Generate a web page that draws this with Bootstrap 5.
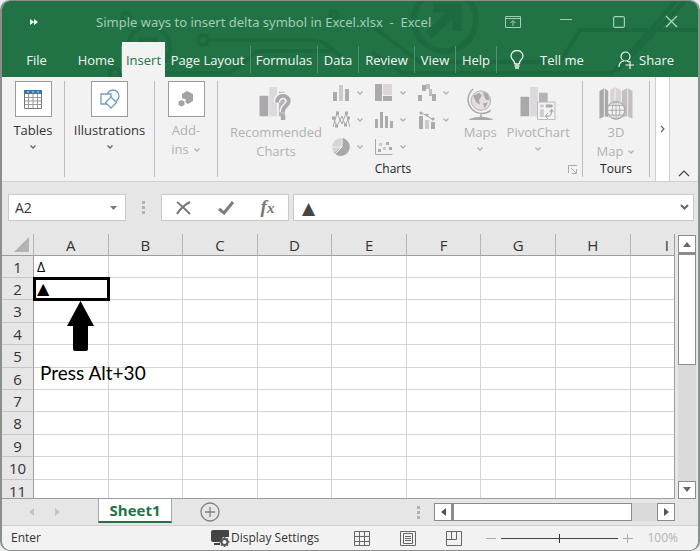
<!DOCTYPE html>
<html lang="en">
<head>
<meta charset="utf-8">
<meta name="viewport" content="width=device-width, initial-scale=1">
<title>Simple ways to insert delta symbol in Excel.xlsx - Excel</title>
<link href="https://cdn.jsdelivr.net/npm/bootstrap@5.3.0/dist/css/bootstrap.min.css" rel="stylesheet">
<style>
:root{--ui:"Open Sans","Noto Sans",sans-serif;--green:#217346;--line:#d4d4d4}
body{font-family:var(--ui);font-size:14px;line-height:18px;color:#333;background:#eceeed}
button,input{font-family:inherit;color:inherit}
button{border:0;background:none;padding:0}
svg{display:block;flex:none}
.window{height:100vh;min-height:480px;border:1px solid #8a8f8c;border-width:1px 2px;border-radius:10px;background:#e6e6e6}
.top-band{background:var(--green);color:#fff}
.circuit{position:absolute;top:0;right:0;z-index:0}
.title-row{height:41px;color:#a3cdb4;font-size:13px}
.quick{width:64px;color:#fff}
.file-name{padding-left:30px;white-space:pre;font-family:"Noto Sans",sans-serif}
.win-btn{width:53px;height:38px}
.tab-row{display:grid;grid-template-columns:69px 51px 43px 86px 67px 41px 56px 41px 41px 1fr auto;height:35px}
.tab-row a,.tab-row button{color:#f1f7f3;text-decoration:none;font-size:13px;white-space:nowrap;display:flex;align-items:center;justify-content:center}
.tab-row .on{background:#f2f2f2;color:var(--green)}
.tab-row .sep{border-right:1px solid #4f9470;margin:4px 0}
.tell-me{padding-left:13px}
.ribbon{background:#f2f2f2;border-bottom:1px solid #cfcfcf;height:107px}
.grp{border-right:1px solid #bdbdbd;margin:4px 0}
.w-side{width:63px}.w-ill{width:90px}.w-tour{width:67px}
.icon-tile{width:37px;height:36px;background:#fff;border:1px solid #9b9b9b}
.rb{display:flex;flex-direction:column;align-items:center;line-height:19px;font-size:13px}
.rb-big{margin-top:6px;align-self:flex-start}
.rb-big>svg:first-child{margin-bottom:2px}
.off{color:#b1b1b1}
.low{color:#666}
.chart-tools{padding:0 12px}
.minis{display:grid;grid-template-columns:43px 43px 36px;grid-auto-rows:23px;row-gap:4px}
.minis button{display:flex;align-items:center;gap:6px;color:#b1b1b1}
.cap{font-size:12px;color:#222;line-height:16px}
.more-strip{width:15px;background:#fff;border:1px solid #cfcfcf;border-width:0 1px;margin-left:5px}
.fold{width:28px;padding-bottom:4px}
.fbar{padding:12px 4px 13px 6px}
.field{height:27px;background:#fff;border:1px solid #c9c9c9}
.name-box{width:118px}
.field input{border:0;background:none;outline:0;min-width:0;padding:0 6px;flex:1}
.tools{width:128px}
.fx{font-family:"Liberation Serif",serif;font-style:italic;font-weight:bold;font-size:19px;color:#777}
.fx small{font-size:15px}
.dots i{display:block;width:3px;height:3px;background:#b3b3b3;margin:2px 0}
.formula{font-family:"DejaVu Sans",sans-serif;font-size:17px;color:#444}
.sheet{min-height:0}
.grid-clip{overflow:hidden;border-bottom:1px solid #9d9d9d;border-right:1px solid #9d9d9d;min-width:0}
.cells{table-layout:fixed;width:100%;border-collapse:separate;border-spacing:0;background:#fff;font-size:15px;line-height:20px}
.cells th{font-weight:400;text-align:center;padding:0;background:#e6e6e6;color:#333;overflow:hidden}
.cells thead th{height:22px;border-right:1px solid #b5b5b5;border-bottom:1px solid #9d9d9d}
.cells thead th:last-child{text-align:right;padding-right:5px;border-right:0}
.cells tbody th{border-right:1px solid #9d9d9d;border-bottom:1px solid #c6c6c6}
.cells td{padding:0 3px;border-right:1px solid var(--line);border-bottom:1px solid var(--line)}
.cells td:last-child{border-right:0}
.cells tbody tr{height:22px}
.cells tbody tr:nth-child(5n+3),.cells tbody tr:nth-child(5n+5){height:23px}
.c-head{width:32px}.c-col{width:11.1%}
.cells .picked{outline:3px solid #000;outline-offset:-2px;font-family:"DejaVu Sans",sans-serif;font-size:16px;color:#000}
.cells .delta{font-size:14px;color:#000}
.note{left:38px;top:67px;color:#000;font:19px/24px Lato,sans-serif}
.note svg{margin:0 0 10px 27px}
.vbar{width:18px;margin:1px 2px 0 3px;background:#dadada}
.sq{width:18px;height:18px;flex:none;background:#fff;border:1px solid #8c8c8c;display:flex;align-items:center;justify-content:center}
.vthumb{height:112px;background:#fff;border:1px solid #8c8c8c;border-top-width:2px}
.sheet-row{height:28px;border-bottom:1px solid #cfcfcf}
.nav-arrows{width:96px;padding-left:27px;gap:21px}
.sheet-tab{width:74px;height:24px;background:#fff;border:1px solid #a8a8a8;border-width:0 1px;border-bottom:2px solid var(--green);color:var(--green);font-weight:700;font-size:15px}
.h-grip{margin-right:14px}
.hbar{width:241px;height:18px;background:#dadada;margin-right:23px}
.hthumb{width:180px;background:#fff;border:1px solid #8c8c8c;border-left-width:2px}
.status{height:24px;background:#f2f2f2;font-size:12px;border-radius:0 0 8px 8px;padding:0 20px 0 9px}
.mode{width:200px}
.views{gap:30px;margin-right:24px}
.zoom{appearance:none;width:117px;height:9px;background:linear-gradient(#444,#444) center/100% 1px no-repeat;margin:0 5px}
.zoom::-webkit-slider-thumb{appearance:none;width:1px;height:9px;background:#333}
.pct{color:#b3b3b3;width:45px;text-align:right}
</style>
<script src="https://cdn.jsdelivr.net/npm/bootstrap@5.3.0/dist/js/bootstrap.bundle.min.js"></script>
</head>
<body>
<svg width="0" height="0" class="position-absolute"><defs>
<symbol id="chev" viewBox="0 0 8 6"><path d="M1.5 1.5 4 4 6.500 1.500" fill="none" stroke="currentColor" stroke-width="1.300"/></symbol>
</defs></svg>
<div class="window d-flex flex-column overflow-hidden">
<header class="top-band position-relative">
<svg class="circuit" width="696" height="76" viewBox="2 1 696 76" fill="none" stroke="#1e6a40" stroke-width="4"><circle cx="203" cy="40" r="5"/><path d="M208 40H314Q325 41 335 52L341 56"/><circle cx="149" cy="47" r="21"/><path d="M138 40H158" stroke-width="5"/><circle cx="115" cy="73" r="5"/><path d="M120 73H230L258 51H332M372 26 420 62H560L580 30H700M372 52 402 73H612L676 1M616 72 685 1"/><circle cx="445" cy="20" r="31" stroke-width="6"/><path d="M429 35 456 9M433 8H457V31" stroke-width="9"/><circle cx="126" cy="17" r="4"/><circle cx="334" cy="15" r="4"/></svg>
<div class="title-row d-flex align-items-center position-relative">
<button class="quick d-flex justify-content-center" aria-label="Quick access"><svg width="8" height="6" viewBox="0 0 8 6" fill="#fff"><path d="M0 0 4 3 0 6ZM4 0 8 3 4 6Z"/></svg></button>
<div class="file-name flex-fill">Simple ways to insert delta symbol in Excel.xlsx  -  Excel</div>
<button class="win-btn d-flex align-items-center justify-content-center" aria-label="Ribbon display options"><svg width="16" height="12" viewBox="0 0 16 12" fill="none" stroke="#a3cdb4"><path d="M.5.5H15.500V11.500H.5ZM.5 2.500H15.500M8 10V5M5.500 7 8 4.500 10.500 7"/></svg></button>
<button class="win-btn d-flex align-items-center justify-content-center" aria-label="Minimize"><svg width="12" height="7" stroke="#a3cdb4"><path d="M0 1.500H12"/></svg></button>
<button class="win-btn d-flex align-items-center justify-content-center" aria-label="Maximize"><svg width="12" height="12" fill="none" stroke="#a3cdb4" stroke-width="1.200"><rect x=".6" y=".6" width="10.800" height="10.800" rx="1.500"/></svg></button>
<button class="win-btn d-flex align-items-center justify-content-center" aria-label="Close"><svg width="13" height="13" stroke="#b5d8c3" stroke-width="1.200"><path d="M1 1 12 12M12 1 1 12"/></svg></button>
</div>
<nav class="tab-row position-relative">
<a href="#">File</a><a href="#" class="sep">Home</a><a href="#" class="on">Insert</a><a href="#" class="sep">Page Layout</a><a href="#" class="sep">Formulas</a><a href="#" class="sep">Data</a><a href="#" class="sep">Review</a><a href="#" class="sep">View</a><a href="#" class="sep">Help</a>
<button class="tell-me justify-content-start" type="button"><svg class="me-3" width="14" height="19" viewBox="0 0 14 19" fill="none" stroke="#f1f7f3" stroke-width="1.300"><path d="M4.500 14V12.500C4.500 10.500 1 9.500 1 6A6 5.500 0 0 1 13 6C13 9.500 9.500 10.500 9.500 12.500V14M4.500 14H9.500M4.500 16H9.500M5 18H9"/></svg>Tell me</button>
<button class="gap-1 pe-4" type="button"><svg width="17" height="18" viewBox="0 0 17 18" fill="none" stroke="#f1f7f3" stroke-width="1.200"><circle cx="7.500" cy="5.500" r="4.500"/><path d="M1 16C1 12.500 3 10.500 6 10M9 10 11 11M7.500 14H16M12 10V18"/></svg>Share</button>
</nav>
</header>

<section class="ribbon d-flex" aria-label="Insert ribbon">
<div class="grp w-side"><button class="rb w-100"><span class="icon-tile d-flex align-items-center justify-content-center mb-1"><svg width="18" height="19" viewBox="0 0 18 19"><path d="M.5.500H17.500V18.500H.5Z" fill="#fff" stroke="#777"/><path d="M0 0H18V4H0Z" fill="#3b79a8"/><path d="M4.500 4V18M9 4V18M13.500 4V18M1 7.500H17M1 11H17M1 14.500H17" stroke="#999"/><path d="M3 1.500H5L4 3ZM8 1.500H10L9 3ZM13 1.500H15L14 3Z" fill="#fff"/></svg></span>Tables<svg class="mt-1 low" width="8" height="6"><use href="#chev"/></svg></button></div>
<div class="grp w-ill"><button class="rb w-100"><span class="icon-tile d-flex align-items-center justify-content-center mb-1"><svg width="20" height="20" viewBox="0 0 20 20" fill="#fff" stroke="#6f9dbd" stroke-width="1.300"><circle cx="13" cy="7" r="6"/><path d="M1 5H11V15H1Z"/><path d="M11 8 16.500 13.500 11 19 5.500 13.500Z"/></svg></span>Illustrations<svg class="mt-1 low" width="8" height="6"><use href="#chev"/></svg></button></div>
<div class="grp w-side"><button class="rb off w-100"><span class="icon-tile d-flex align-items-center justify-content-center mb-1"><svg width="16" height="16" viewBox="0 0 16 16" fill="#a3a3a3"><path d="M9 0 15 3V10L10 13 7.500 11.500V8L4 7.500V3Z"/><path d="M3.500 9 6.500 10.500V14L3.500 15.500.5 14V10.500Z"/></svg></span>Add-<span class="d-flex align-items-center gap-1">ins <svg width="8" height="6"><use href="#chev"/></svg></span></button></div>

<div class="grp flex-fill d-flex flex-column">
<div class="chart-tools d-flex flex-fill justify-content-between">
<button class="rb rb-big off"><svg width="34" height="34" viewBox="0 0 34 35"><path d="M0 9H9V30H0Z" fill="#aaa8aa"/><path d="M10 0H18V30H10Z" fill="#dcd8db"/><path d="M20 5H26V30H20Z" fill="#b5b3b5"/><path d="M18 16C18 6 31 8 30 15 29 20 24 20 24 26" fill="none" stroke="#f2f2f2" stroke-width="7"/><path d="M18 16C18 6 31 8 30 15 29 20 24 20 24 26" fill="none" stroke="#aaa8aa" stroke-width="4"/><path d="M22 29H26.500V34H22Z" fill="#aaa8aa"/></svg>Recommended<br>Charts</button>
<div class="minis">
<button aria-label="Column chart"><svg width="18" height="18" viewBox="0 0 18 18" fill="#ada9ad"><path d="M1 8H5V17H1ZM13 5H17V17H13Z"/><path d="M7 1H11V17H7Z" fill="#cfc9ce"/></svg><svg width="8" height="6"><use href="#chev"/></svg></button>
<button aria-label="Hierarchy chart"><svg width="18" height="18" viewBox="0 0 18 18" fill="#ada9ad"><path d="M0 0H7V17H0ZM8 12H17V17H8Z"/><path d="M8 0H17V11H8Z" fill="#dcd6db"/></svg><svg width="8" height="6"><use href="#chev"/></svg></button>
<button aria-label="Waterfall chart"><svg width="18" height="18" viewBox="0 0 18 18" fill="#ada9ad"><path d="M0 11H4V17H0ZM4 1H8V7H4ZM14 10H18V17H14Z"/><path d="M8 0H12V5H8ZM11 5H14V12H11Z" fill="#c2bdc1"/></svg><svg width="8" height="6"><use href="#chev"/></svg></button>
<button aria-label="Line chart"><svg width="18" height="18" viewBox="0 0 18 18" fill="none" stroke="#aaa8aa"><path d="M1 16 5 2 10 13 14 2 18 16M1 7 5 15 10 5 13 14 17 7"/><path d="M0 7H3M4 2H7M13 2H16M3 15H6M12 14H15M15 7H18" stroke-width="3"/></svg><svg width="8" height="6"><use href="#chev"/></svg></button>
<button aria-label="Statistic chart"><svg width="18" height="18" viewBox="0 0 18 18" fill="#ada9ad"><path d="M0 8H3V17H0ZM5 1H8V17H5ZM10 5H13V17H10ZM15 10H18V17H15Z"/></svg><svg width="8" height="6"><use href="#chev"/></svg></button>
<button aria-label="Combo chart"><svg width="18" height="18" viewBox="0 0 18 18" fill="#ada9ad"><path d="M1 5H5V18H1ZM13 11H17V18H13Z"/><path d="M7 9H11V18H7Z" fill="#d0cacf"/><path d="M2 2 8 4 15 9" fill="none" stroke="#aaa"/><circle cx="3" cy="2" r="1.600"/><circle cx="9" cy="4" r="1.600"/><circle cx="15" cy="8" r="1.600"/></svg><svg width="8" height="6"><use href="#chev"/></svg></button>
<button aria-label="Pie chart"><svg width="18" height="18" viewBox="0 0 18 18"><circle cx="9" cy="9" r="9" fill="#d9d3d8"/><path d="M10 0A9 9 0 1 1 2 15L10 9Z" fill="#aaa8aa"/><path d="M10 0V9H0M10 9 3 16" stroke="#f2f2f2" fill="none"/></svg><svg width="8" height="6"><use href="#chev"/></svg></button>
<button aria-label="Scatter chart"><svg width="18" height="18" viewBox="0 0 18 18" fill="#ada9ad"><path d="M.5 1V16.500H17.500" fill="none" stroke="#aaa"/><path d="M3 11H6V14H3ZM11 4H14V7H11ZM14 9H17V12H14Z"/><path d="M4 5H7V8H4ZM8 9H11V12H8Z" fill="#ccc"/></svg><svg width="8" height="6"><use href="#chev"/></svg></button>
</div>
<button class="rb rb-big off"><svg width="26" height="34" viewBox="0 0 26 35"><circle cx="14" cy="14" r="10" fill="#e3dee2" stroke="#b5b1b4"/><path d="M6 9 12 6 15 9 12 13 13 18 9 16ZM16 5 21 7 23 14 19 13 17 9ZM16 17 21 16 18 22Z" fill="#aaa8aa"/><path d="M6 2A14 14 0 1 0 24 24M14 28V31" fill="none" stroke="#aaa8aa" stroke-width="1.500"/><path d="M2 33Q14 28 26 33V34H2Z" fill="#aaa8aa"/></svg>Maps<svg class="mt-1" width="8" height="6"><use href="#chev"/></svg></button>
<button class="rb rb-big off"><svg width="36" height="34" viewBox="0 0 36 35"><path d="M0 10H9V30H0Z" fill="#aaa8aa"/><path d="M10 0H18V30H10Z" fill="#dcd8db"/><path d="M19 6H28V16H19Z" fill="#b5b3b5"/><path d="M17.500 15.500H35.500V33.500H17.500Z" fill="#f5f2f4" stroke="#bbb"/><path d="M20 18H24V21H20ZM20 23H24V31H20Z" fill="#d0cacf"/><path d="M26 18H33V21H26Z" fill="#aaa"/><path d="M26 30H30Q32 29 32 24M28 27 25.500 30 28 32.500M30 26 32 23 34 26" fill="none" stroke="#999"/></svg>PivotChart<svg class="mt-1" width="8" height="6"><use href="#chev"/></svg></button>
</div>
<div class="d-flex align-items-center pe-1"><span class="cap flex-fill text-center">Charts</span><button aria-label="Chart settings"><svg width="10" height="9" viewBox="0 0 10 9" fill="none" stroke="#aaa"><path d="M.5 8V.5H9M3 3 8 8M8.500 4V8.500H4"/></svg></button></div>
</div>

<div class="grp w-tour d-flex flex-column align-items-center justify-content-between"><button class="rb rb-big align-self-center off"><svg width="34" height="34" viewBox="0 0 34 35"><path d="M0 4 5 1 9 4V31L5 30 0 33Z" fill="#aaa8aa"/><path d="M11 3 16 0 22 3V20H11Z" fill="#d9d3d8"/><path d="M23 4 29 1 34 4V33L29 30 23 31Z" fill="#c3bec2"/><path d="M5 1V30M16 0V20M29 1V30" stroke="#eee"/><circle cx="17" cy="24" r="9" fill="#f4f2f3" stroke="#aaa8aa" stroke-width="1.300"/><ellipse cx="17" cy="24" rx="4" ry="9" fill="none" stroke="#aaa"/><path d="M17 15V33M8 24H26M10 19H24M10 29H24" stroke="#aaa"/></svg>3D<span class="d-flex align-items-center gap-1">Map <svg width="8" height="6"><use href="#chev"/></svg></span></button><span class="cap">Tours</span></div>
<button class="more-strip d-flex align-items-center justify-content-center" aria-label="More commands"><svg width="5" height="8" fill="none" stroke="#666" stroke-width="1.200"><path d="M1 1 4 4 1 7"/></svg></button>
<button class="fold d-flex align-items-end justify-content-center" aria-label="Collapse ribbon"><svg width="12" height="8" fill="none" stroke="#444" stroke-width="1.200"><path d="M1 7 6 2 11 7"/></svg></button>
</section>

<div class="fbar d-flex align-items-center">
<div class="field name-box d-flex align-items-center pe-2"><input aria-label="Name box" value="A2"><button aria-label="Choose name"><svg width="7" height="4" fill="#777"><path d="M0 0H7L3.500 4Z"/></svg></button></div>
<div class="dots mx-3 px-0"><i></i><i></i><i></i></div>
<div class="field tools d-flex align-items-center justify-content-around">
<button aria-label="Cancel"><svg width="15" height="14" fill="none" stroke="#777" stroke-width="2"><path d="M1 1Q5 4 14 13M14 1Q6 5 1 13"/></svg></button>
<button aria-label="Enter"><svg width="16" height="14" fill="none" stroke="#7d7d7d" stroke-width="3"><path d="M1 8 6 12 15 1"/></svg></button>
<button class="fx" aria-label="Insert function">f<small>x</small></button></div>
<div class="field d-flex align-items-center flex-fill ms-1 pe-1"><input class="formula px-2" aria-label="Formula bar" value="▲"><button aria-label="Expand formula bar"><svg width="9" height="7" fill="none" stroke="#666" stroke-width="2"><path d="M1 1 4.500 4.500 8 1"/></svg></button></div>
</div>

<main class="sheet d-flex flex-fill position-relative">
<div class="grid-clip flex-fill">
<table class="cells">
<colgroup><col class="c-head"><col class="c-col"><col class="c-col"><col class="c-col"><col class="c-col"><col class="c-col"><col class="c-col"><col class="c-col"><col class="c-col"><col></colgroup>
<thead><tr><th aria-label="Select all"><svg class="ms-auto me-1" width="15" height="15" fill="#b3b3b3"><path d="M15 0V15H0Z"/></svg></th><th>A</th><th>B</th><th>C</th><th>D</th><th>E</th><th>F</th><th>G</th><th>H</th><th>I</th></tr></thead>
<tbody>
<tr><th>1</th><td class="delta">Δ</td><td></td><td></td><td></td><td></td><td></td><td></td><td></td><td></td></tr>
<tr><th>2</th><td class="picked">▲</td><td></td><td></td><td></td><td></td><td></td><td></td><td></td><td></td></tr>
<tr><th>3</th><td></td><td></td><td></td><td></td><td></td><td></td><td></td><td></td><td></td></tr>
<tr><th>4</th><td></td><td></td><td></td><td></td><td></td><td></td><td></td><td></td><td></td></tr>
<tr><th>5</th><td></td><td></td><td></td><td></td><td></td><td></td><td></td><td></td><td></td></tr>
<tr><th>6</th><td></td><td></td><td></td><td></td><td></td><td></td><td></td><td></td><td></td></tr>
<tr><th>7</th><td></td><td></td><td></td><td></td><td></td><td></td><td></td><td></td><td></td></tr>
<tr><th>8</th><td></td><td></td><td></td><td></td><td></td><td></td><td></td><td></td><td></td></tr>
<tr><th>9</th><td></td><td></td><td></td><td></td><td></td><td></td><td></td><td></td><td></td></tr>
<tr><th>10</th><td></td><td></td><td></td><td></td><td></td><td></td><td></td><td></td><td></td></tr>
<tr><th>11</th><td></td><td></td><td></td><td></td><td></td><td></td><td></td><td></td><td></td></tr>
</tbody></table>
</div>
<div class="note position-absolute"><svg width="27" height="50" viewBox="0 0 27 50"><path d="M13.500 0 27 25H21V48Q21 50 19 50H8Q6 50 6 48V25H0Z"/></svg>Press Alt+30</div>
<div class="vbar d-flex flex-column" aria-label="Vertical scroll bar"><button class="sq" aria-label="Scroll up"><svg width="8" height="5" fill="#666"><path d="M0 5H8L4 0Z"/></svg></button><div class="vthumb"></div><button class="sq mt-auto" aria-label="Scroll down"><svg width="8" height="5" fill="#666"><path d="M0 0H8L4 5Z"/></svg></button></div>
</main>

<div class="sheet-row d-flex align-items-center">
<div class="nav-arrows d-flex"><button aria-label="Previous sheet"><svg width="5" height="8" fill="#c2c2c2"><path d="M5 0V8L0 4Z"/></svg></button><button aria-label="Next sheet"><svg width="5" height="8" fill="#c2c2c2"><path d="M0 0V8L5 4Z"/></svg></button></div>
<button class="sheet-tab align-self-start">Sheet1</button>
<button class="ms-4 ps-1" aria-label="New sheet"><svg width="20" height="20" fill="none" stroke="#808080" stroke-width="1.300"><circle cx="10" cy="10" r="9"/><path d="M5 10H15M10 5V15"/></svg></button>
<div class="dots h-grip ms-auto"><i></i><i></i><i></i></div>
<div class="hbar d-flex"><button class="sq" aria-label="Scroll left"><svg width="5" height="8" fill="#555"><path d="M5 0V8L0 4Z"/></svg></button><div class="hthumb"></div><button class="sq ms-auto" aria-label="Scroll right"><svg width="5" height="8" fill="#555"><path d="M0 0V8L5 4Z"/></svg></button></div>
</div>

<footer class="status d-flex align-items-center">
<span class="mode">Enter</span>
<button class="d-flex align-items-center"><svg width="20" height="17" viewBox="0 0 20 17"><path d="M2 0H17Q18 0 18 1V7H12L9 12H2Q0 12 0 10V2Q0 0 2 0ZM3 13H9V15H3Z" fill="#444"/><circle cx="13.500" cy="12" r="3" fill="none" stroke="#555" stroke-width="2"/><path d="M13.500 7V9M13.500 15V17M8.500 12H10.500M16.500 12H18.500M10 8.500 11.500 10M17 8.500 15.500 10M10 15.500 11.500 14M17 15.500 15.500 14" stroke="#555" stroke-width="1.500"/></svg>Display Settings</button>
<div class="views d-flex ms-auto"><button aria-label="Normal view"><svg width="16" height="15" fill="none" stroke="#666"><path d="M.5.500H15.500V14.500H.5ZM5.500 0V15M10.500 0V15M0 5.500H16M0 10.500H16"/></svg></button><button aria-label="Page layout"><svg width="16" height="15" fill="none" stroke="#666"><path d="M.5.500H15.500V14.500H.5ZM3.500 2.500H12.500V12.500H3.500ZM5 5.500H11M5 7.500H11M5 9.500H11"/></svg></button><button aria-label="Page break preview"><svg width="16" height="15" fill="none" stroke="#666"><path d="M.5.500H15.500V14.500H.5ZM5.500 0V8.500M10.500 0V8.500H0"/></svg></button></div>
<button aria-label="Zoom out"><svg width="10" height="9" stroke="#aaa"><path d="M0 4.500H10"/></svg></button><input class="zoom" type="range" min="0" max="200" value="100" aria-label="Zoom"><button aria-label="Zoom in"><svg width="10" height="9" stroke="#aaa"><path d="M0 4.500H10M4.500 0V9"/></svg></button><span class="pct">100%</span>
</footer>
</div>
</body>
</html>
